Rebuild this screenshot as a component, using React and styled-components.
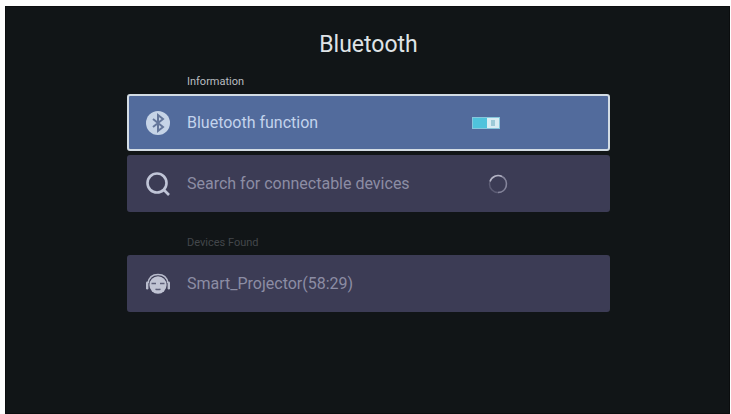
import React, { useState } from "react"
import styled, { createGlobalStyle, css } from "styled-components"

const GlobalStyle = createGlobalStyle`
    body {
        margin: 0;
        background-color: #fdfdfd;
        font-family: Roboto, "Liberation Sans", sans-serif;
    }
`

const Frame = styled.div`
    min-height: 100vh;
    display: flex;
    padding: 6px 1px 0 5px;
    box-sizing: border-box;
`

const Screen = styled.main`
    flex: 1;
    display: flex;
    flex-direction: column;
    align-items: center;
    padding: 24px 0 24px 2px;
    background-color: #111517;
    border: 1px solid #0b0d0e;
    box-sizing: border-box;
`

const Title = styled.h1`
    margin: 0;
    font-size: 23px;
    line-height: 28px;
    font-weight: 400;
    color: #dfe3e6;
`

const Section = styled.section`
    width: 67%;
    display: flex;
    flex-direction: column;
    gap: 4px;
    padding-top: ${(props) => (props.$spaced ? "24px" : "16px")};
`

const SectionTitle = styled.h2`
    margin: 0;
    padding: 0 0 1px 60px;
    font-size: 11px;
    line-height: 14px;
    font-weight: 400;
    color: ${(props) => (props.$dim ? "#43474b" : "#b9bdc0")};
`

const rowStyle = css`
    width: 100%;
    height: 57px;
    display: grid;
    grid-template-columns: 24px 1fr 36px;
    column-gap: 17px;
    align-items: center;
    padding: 0 100px 0 17px;
    box-sizing: border-box;
    border: 2px solid #3c3c55;
    border-radius: 3px;
    background-color: #3c3c55;
    color: #8c8da4;
    font: inherit;
    font-size: 16px;
    line-height: 20px;
    text-align: left;
    cursor: pointer;
`

const RowButton = styled.button`
    ${rowStyle}
`

const RowLabel = styled.label`
    ${rowStyle}
    background-color: #526b9c;
    border-color: #d3dce4;
    color: #c3d3ec;
`

const Trailing = styled.span`
    display: flex;
    justify-content: ${(props) => (props.$end ? "flex-end" : "flex-start")};
`

const Switch = styled.input`
    appearance: none;
    display: flex;
    width: 28px;
    height: 12px;
    margin: 0;
    border: 1px solid #86c6dc;
    background-color: #4fc3dc;
    box-sizing: border-box;
    cursor: pointer;
    justify-content: flex-start;
    align-items: stretch;
    &:checked {
        justify-content: flex-end;
    }
    &::before {
        content: "";
        width: 12px;
        background: linear-gradient(#9ccbd8, #9ccbd8) center / 4px 6px no-repeat #d8edf3;
    }
`

const BluetoothIcon = () => (
    <svg width="24" height="24" viewBox="0 0 24 24" aria-hidden="true">
        <circle cx="12" cy="12" r="12" fill="#c6d4e7" />
        <path d="M7 8l10 8-5 4V4l5 4-10 8" fill="none" stroke="#64769a" strokeWidth="2" />
    </svg>
)

const SearchIcon = () => (
    <svg width="24" height="24" viewBox="0 0 24 24" fill="none" stroke="#c0c5d7" strokeWidth="2.6" aria-hidden="true">
        <circle cx="11" cy="11" r="9.5" />
        <path d="M17.5 17.5l5.5 5.5" />
    </svg>
)

const HeadsetIcon = () => (
    <svg width="24" height="24" viewBox="0 0 24 24" aria-hidden="true">
        <path d="M2 11C3 5 7 2.5 12 2.5S21 5 22 11" fill="none" stroke="#b9bccd" strokeWidth="1.6" />
        <rect x="0" y="9.5" width="2.4" height="8" rx="1.2" fill="#b9bccd" />
        <rect x="21.6" y="9.5" width="2.4" height="8" rx="1.2" fill="#b9bccd" />
        <ellipse cx="12" cy="13" rx="8.6" ry="8.8" fill="#c1c4d4" />
        <path d="M5.5 11.5h4.5M14 11.5h4.5M9.5 17.2q2.5.8 5 0" fill="none" stroke="#5e5f79" strokeWidth="1.5" />
    </svg>
)

const Spinner = () => (
    <svg width="20" height="20" viewBox="0 0 20 20" fill="none" strokeWidth="1.5" aria-hidden="true">
        <circle cx="10" cy="10" r="8.5" stroke="#5c5c74" />
        <path d="M2 7.5A8.5 8.5 0 0 1 14 2.5" stroke="#b3b3c4" />
        <path d="M14 2.5A8.5 8.5 0 0 1 10 18.5" stroke="#85859b" />
    </svg>
)

export default function App() {
    const [enabled, setEnabled] = useState(true)

    return (
        <Frame>
            <GlobalStyle />
            <Screen>
                <Title>Bluetooth</Title>
                <Section>
                    <SectionTitle>Information</SectionTitle>
                    <RowLabel htmlFor="bluetooth">
                        <BluetoothIcon />
                        <span>Bluetooth function</span>
                        <Trailing>
                            <Switch
                                id="bluetooth"
                                type="checkbox"
                                role="switch"
                                checked={enabled}
                                onChange={(e) => setEnabled(e.target.checked)}
                            />
                        </Trailing>
                    </RowLabel>
                    <RowButton type="button">
                        <SearchIcon />
                        <span>Search for connectable devices</span>
                        <Trailing $end>
                            <Spinner />
                        </Trailing>
                    </RowButton>
                </Section>
                <Section $spaced>
                    <SectionTitle $dim>Devices Found</SectionTitle>
                    <RowButton type="button">
                        <HeadsetIcon />
                        <span>Smart_Projector(58:29)</span>
                    </RowButton>
                </Section>
            </Screen>
        </Frame>
    )
}
